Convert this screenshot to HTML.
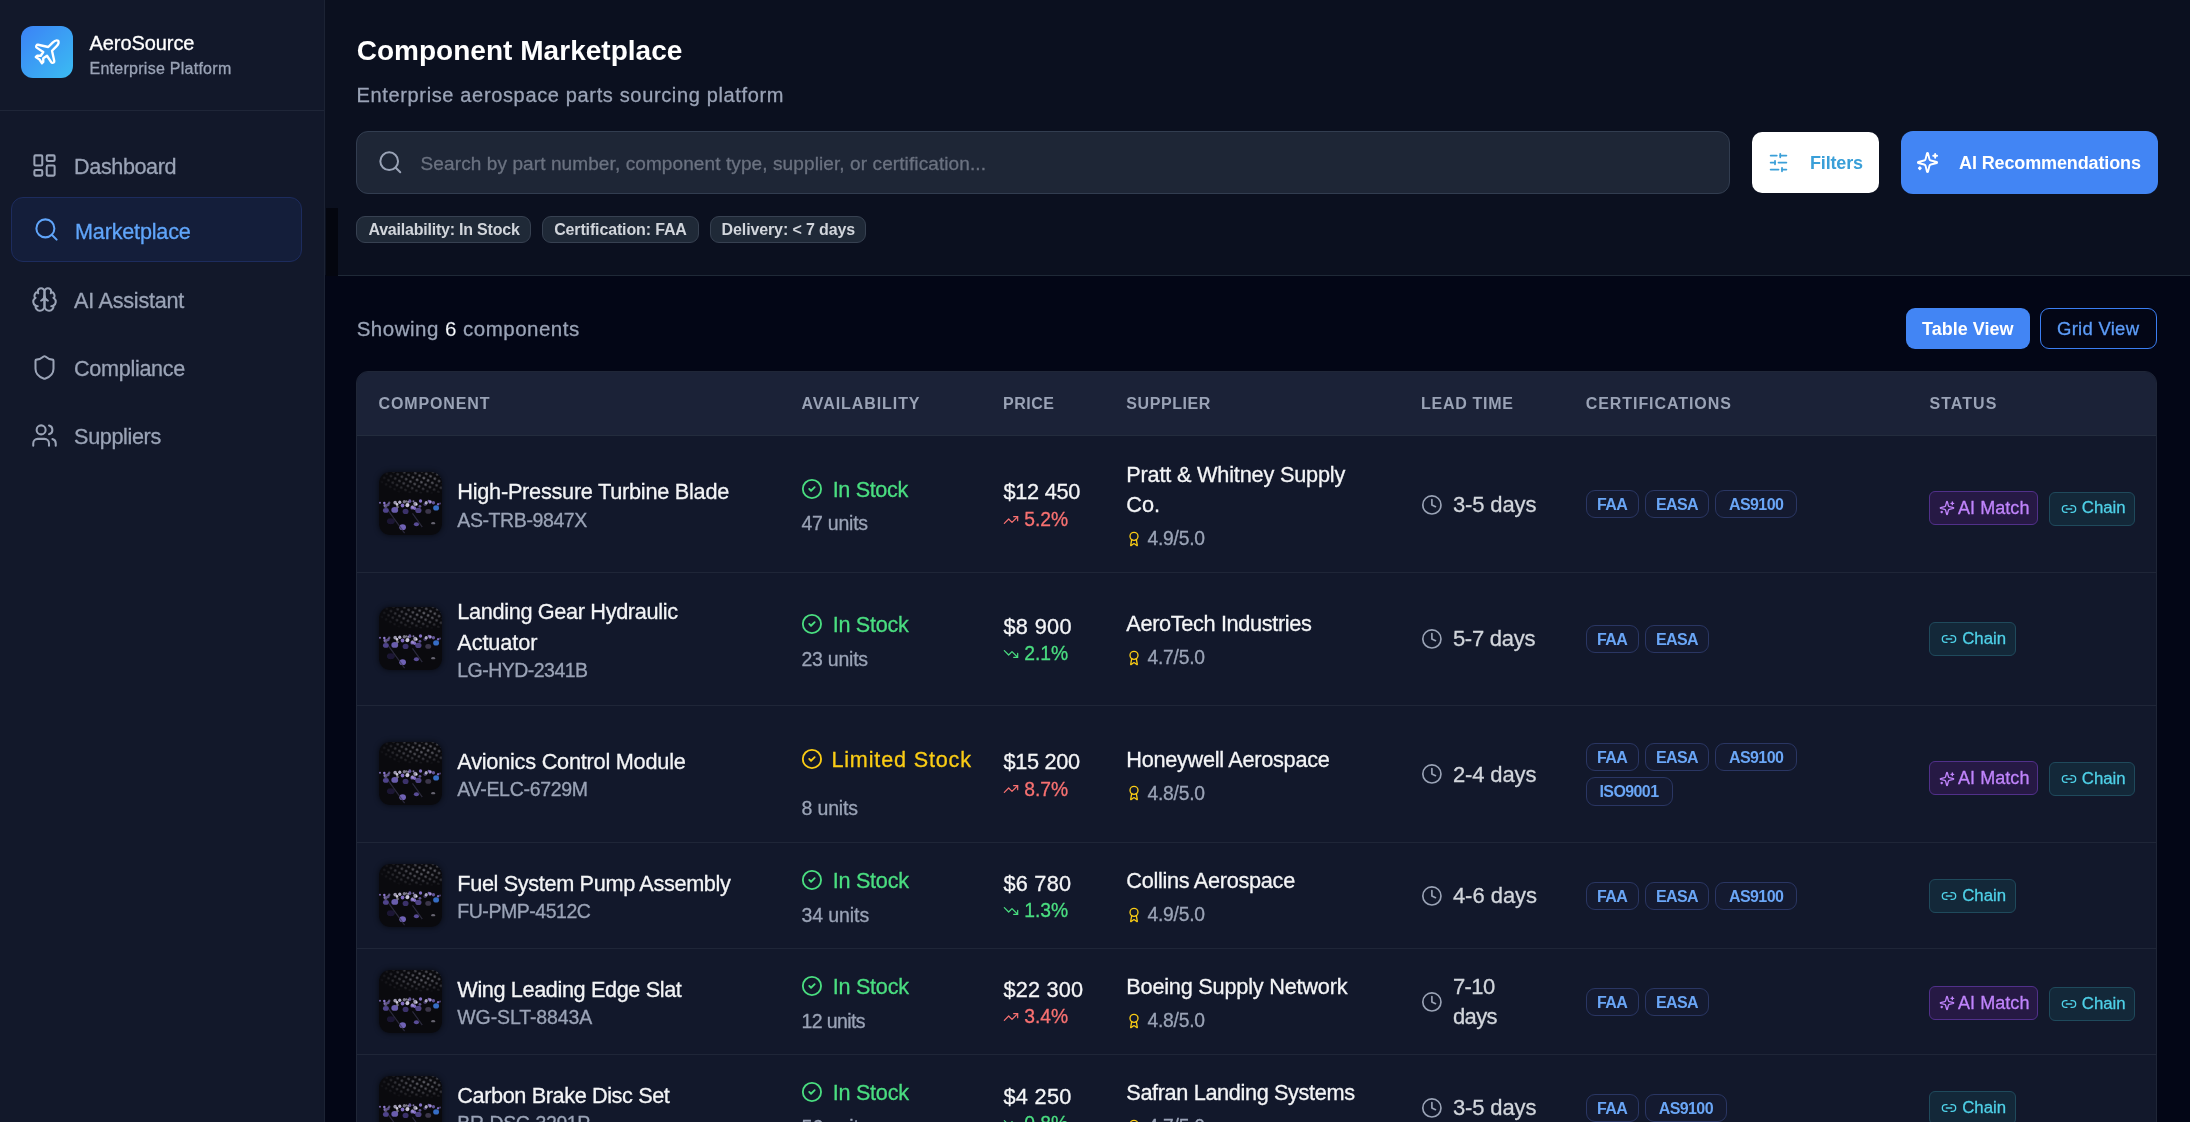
<!DOCTYPE html>
<html><head><meta charset="utf-8"><style>
html,body{margin:0;padding:0;width:2190px;height:1122px;overflow:hidden;background:#030712;font-family:"Liberation Sans", sans-serif}
</style></head><body>
<svg width="0" height="0" style="position:absolute"><defs>
<pattern id="hd" width="5" height="5" patternUnits="userSpaceOnUse" patternTransform="rotate(30)"><circle cx="2.5" cy="2.5" r="1.3" fill="#a0a0aa"/></pattern><filter id="bl"><feGaussianBlur stdDeviation=".45"/></filter>
<radialGradient id="hg" cx=".72" cy=".35" r=".75"><stop offset="0" stop-color="#fff" stop-opacity="1"/><stop offset=".6" stop-color="#fff" stop-opacity=".45"/><stop offset="1" stop-color="#fff" stop-opacity="0"/></radialGradient>
<mask id="hm"><rect width="64" height="22" fill="url(#hg)"/></mask>
</defs></svg>
<div style="position:absolute;left:0;top:0;width:2190px;height:1122px;will-change:transform">
<div style="position:absolute;left:0px;top:0px;width:324px;height:1122px;background:#12182a"></div><div style="position:absolute;left:324px;top:0px;width:1px;height:1122px;background:#1c2334"></div><div style="position:absolute;left:21px;top:26px;width:52px;height:52px;border-radius:12px;background:linear-gradient(135deg,#3b82f6,#3bbcf2)"></div><svg style="position:absolute;left:32px;top:37px" width="30" height="30" viewBox="0 0 24 24" fill="none" stroke="#fff" stroke-width="1.9" stroke-linecap="round" stroke-linejoin="round"><path d="M17.8 19.2 16 11l3.5-3.5C21 6 21.5 4 21 3c-1-.5-3 0-4.5 1.5L13 8 4.8 6.2c-.5-.1-.9.1-1.1.5l-.3.5c-.2.5-.1 1 .3 1.3L9 12l-2 3H4l-1 1 3 2 2 3 1-1v-3l3-2 3.5 5.3c.3.4.8.5 1.3.3l.5-.2c.4-.3.6-.7.5-1.2z"/></svg><div id="t0" style="position:absolute;left:89.5px;top:32.67px;font-size:20px;line-height:1;font-weight:400;color:#fff;letter-spacing:-0.069px;white-space:nowrap;-webkit-text-stroke:0.3px #fff;">AeroSource</div><div id="t1" style="position:absolute;left:89.5px;top:60.56px;font-size:16px;line-height:1;font-weight:400;color:#9aa3b6;letter-spacing:0.265px;white-space:nowrap;-webkit-text-stroke:0.3px #9aa3b6;">Enterprise Platform</div><div style="position:absolute;left:0px;top:110px;width:324px;height:1px;background:#1f2638"></div><div style="position:absolute;left:10.5px;top:197px;width:291.5px;height:64.5px;box-sizing:border-box;border-radius:12px;background:#141e3a;border:1px solid #1d2c5e"></div><svg style="position:absolute;left:30.799999999999997px;top:152.2px" width="27" height="27" viewBox="0 0 24 24" fill="none" stroke="#9aa3b6" stroke-width="1.8" stroke-linecap="round" stroke-linejoin="round"><rect width="7" height="9" x="3" y="3" rx="1"/><rect width="7" height="5" x="14" y="3" rx="1"/><rect width="7" height="9" x="14" y="12" rx="1"/><rect width="7" height="5" x="3" y="16" rx="1"/></svg><div id="t2" style="position:absolute;left:74.1px;top:156.42px;font-size:21.6px;line-height:1;font-weight:400;color:#9aa3b6;letter-spacing:-0.405px;white-space:nowrap;-webkit-text-stroke:0.3px #9aa3b6;">Dashboard</div><svg style="position:absolute;left:32.5px;top:215.7px" width="27" height="27" viewBox="0 0 24 24" fill="none" stroke="#60a5fa" stroke-width="1.8" stroke-linecap="round" stroke-linejoin="round"><circle cx="11" cy="11" r="8"/><path d="m21 21-4.3-4.3"/></svg><div id="t3" style="position:absolute;left:75px;top:221.32px;font-size:21.6px;line-height:1;font-weight:400;color:#60a5fa;letter-spacing:-0.183px;white-space:nowrap;-webkit-text-stroke:0.3px #60a5fa;">Marketplace</div><svg style="position:absolute;left:31.0px;top:285.7px" width="27" height="27" viewBox="0 0 24 24" fill="none" stroke="#9aa3b6" stroke-width="1.8" stroke-linecap="round" stroke-linejoin="round"><path d="M12 5a3 3 0 1 0-5.997.125 4 4 0 0 0-2.526 5.77 4 4 0 0 0 .556 6.588A4 4 0 1 0 12 18Z"/><path d="M12 5a3 3 0 1 1 5.997.125 4 4 0 0 1 2.526 5.77 4 4 0 0 1-.556 6.588A4 4 0 1 1 12 18Z"/><path d="M15 13a4.5 4.5 0 0 1-3-4 4.5 4.5 0 0 1-3 4"/><path d="M17.599 6.5a3 3 0 0 0 .399-1.375"/><path d="M6.003 5.125A3 3 0 0 0 6.401 6.5"/><path d="M3.477 10.896a4 4 0 0 1 .585-.396"/><path d="M19.938 10.5a4 4 0 0 1 .585.396"/><path d="M6 18a4 4 0 0 1-1.967-.516"/><path d="M19.967 17.484A4 4 0 0 1 18 18"/></svg><div id="t4" style="position:absolute;left:74.1px;top:289.92px;font-size:21.6px;line-height:1;font-weight:400;color:#9aa3b6;letter-spacing:-0.239px;white-space:nowrap;-webkit-text-stroke:0.3px #9aa3b6;">AI Assistant</div><svg style="position:absolute;left:31.0px;top:353.8px" width="27" height="27" viewBox="0 0 24 24" fill="none" stroke="#9aa3b6" stroke-width="1.8" stroke-linecap="round" stroke-linejoin="round"><path d="M20 13c0 5-3.5 7.5-7.66 8.95a1 1 0 0 1-.67-.01C7.5 20.5 4 18 4 13V6a1 1 0 0 1 1-1c2 0 4.5-1.2 6.24-2.72a1.17 1.17 0 0 1 1.52 0C14.51 3.810 17 5 19 5a1 1 0 0 1 1 1z"/></svg><div id="t5" style="position:absolute;left:74.1px;top:357.62px;font-size:21.6px;line-height:1;font-weight:400;color:#9aa3b6;letter-spacing:-0.315px;white-space:nowrap;-webkit-text-stroke:0.3px #9aa3b6;">Compliance</div><svg style="position:absolute;left:31.0px;top:421.9px" width="27" height="27" viewBox="0 0 24 24" fill="none" stroke="#9aa3b6" stroke-width="1.8" stroke-linecap="round" stroke-linejoin="round"><path d="M16 21v-2a4 4 0 0 0-4-4H6a4 4 0 0 0-4 4v2"/><circle cx="9" cy="7" r="4"/><path d="M22 21v-2a4 4 0 0 0-3-3.87"/><path d="M16 3.13a4 4 0 0 1 0 7.75"/></svg><div id="t6" style="position:absolute;left:74.1px;top:426.22px;font-size:21.6px;line-height:1;font-weight:400;color:#9aa3b6;letter-spacing:-0.366px;white-space:nowrap;-webkit-text-stroke:0.3px #9aa3b6;">Suppliers</div><div style="position:absolute;left:325px;top:0px;width:1865px;height:1122px;background:#030616"></div><div style="position:absolute;left:325px;top:0px;width:1865px;height:275px;background:#0b101f"></div><div style="position:absolute;left:326px;top:208px;width:12px;height:68px;background:#04060f"></div><div style="position:absolute;left:338px;top:275px;width:1852px;height:1px;background:#1f2937"></div><div id="t7" style="position:absolute;left:356.7px;top:37.30px;font-size:28px;line-height:1;font-weight:700;color:#fff;letter-spacing:0.026px;white-space:nowrap;">Component Marketplace</div><div id="t8" style="position:absolute;left:356.5px;top:84.77px;font-size:20px;line-height:1;font-weight:400;color:#9aa3b6;letter-spacing:0.649px;white-space:nowrap;-webkit-text-stroke:0.3px #9aa3b6;">Enterprise aerospace parts sourcing platform</div><div style="position:absolute;left:356px;top:131px;width:1374px;height:62.5px;box-sizing:border-box;border-radius:12px;background:#1e2636;border:1px solid #323d50"></div><svg style="position:absolute;left:376.7px;top:149.4px" width="26.6" height="26.6" viewBox="0 0 24 24" fill="none" stroke="#9aa3b6" stroke-width="1.8" stroke-linecap="round" stroke-linejoin="round"><circle cx="11" cy="11" r="8"/><path d="m21 21-4.3-4.3"/></svg><div id="t9" style="position:absolute;left:420.6px;top:154.02px;font-size:19px;line-height:1;font-weight:400;color:#6b7280;letter-spacing:0.100px;white-space:nowrap;-webkit-text-stroke:0.3px #6b7280;">Search by part number, component type, supplier, or certification...</div><div style="position:absolute;left:356px;top:215.5px;width:175px;height:27.5px;box-sizing:border-box;border-radius:9px;background:#1f2937;border:1px solid #374151"></div><div id="t10" style="position:absolute;left:368.4px;top:221.86px;font-size:16px;line-height:1;font-weight:700;color:#d1d5db;letter-spacing:-0.214px;white-space:nowrap;">Availability: In Stock</div><div style="position:absolute;left:542.3px;top:215.5px;width:156.5px;height:27.5px;box-sizing:border-box;border-radius:9px;background:#1f2937;border:1px solid #374151"></div><div id="t11" style="position:absolute;left:554.2px;top:221.86px;font-size:16px;line-height:1;font-weight:700;color:#d1d5db;letter-spacing:-0.143px;white-space:nowrap;">Certification: FAA</div><div style="position:absolute;left:709.7px;top:215.5px;width:156.79999999999995px;height:27.5px;box-sizing:border-box;border-radius:9px;background:#1f2937;border:1px solid #374151"></div><div id="t12" style="position:absolute;left:721.6px;top:221.86px;font-size:16px;line-height:1;font-weight:700;color:#d1d5db;letter-spacing:-0.120px;white-space:nowrap;">Delivery: &lt; 7 days</div><div style="position:absolute;left:1752px;top:132px;width:126.6px;height:60.7px;border-radius:10px;background:#fff"></div><svg style="position:absolute;left:1768px;top:152px" width="21" height="21" viewBox="0 0 24 24" fill="none" stroke="#3a9fd8" stroke-width="2" stroke-linecap="round" stroke-linejoin="round"><line x1="21" x2="14" y1="4" y2="4"/><line x1="10" x2="3" y1="4" y2="4"/><line x1="21" x2="12" y1="12" y2="12"/><line x1="8" x2="3" y1="12" y2="12"/><line x1="21" x2="16" y1="20" y2="20"/><line x1="12" x2="3" y1="20" y2="20"/><line x1="14" x2="14" y1="2" y2="6"/><line x1="8" x2="8" y1="10" y2="14"/><line x1="16" x2="16" y1="18" y2="22"/></svg><div id="t13" style="position:absolute;left:1810px;top:154.16px;font-size:18px;line-height:1;font-weight:700;color:#3a9fd8;letter-spacing:-0.172px;white-space:nowrap;">Filters</div><div style="position:absolute;left:1901px;top:131px;width:256.5px;height:62.5px;border-radius:12px;background:#4285f4"></div><svg style="position:absolute;left:1915.5px;top:151px" width="23" height="23" viewBox="0 0 24 24" fill="none" stroke="#fff" stroke-width="2" stroke-linecap="round" stroke-linejoin="round"><path d="M9.937 15.5A2 2 0 0 0 8.5 14.063l-6.135-1.582a.5.5 0 0 1 0-.962L8.5 9.936A2 2 0 0 0 9.937 8.5l1.582-6.135a.5.5 0 0 1 .963 0L14.063 8.5A2 2 0 0 0 15.5 9.937l6.135 1.581a.5.5 0 0 1 0 .964L15.5 14.063a2 2 0 0 0-1.437 1.437l-1.582 6.135a.5.5 0 0 1-.963 0z"/><path d="M20 3v4"/><path d="M22 5h-4"/><path d="M4 17v2"/><path d="M5 18H3"/></svg><div id="t14" style="position:absolute;left:1959px;top:154.16px;font-size:18px;line-height:1;font-weight:700;color:#fff;letter-spacing:-0.120px;white-space:nowrap;">AI Recommendations</div><div style="position:absolute;left:1905.5px;top:307.5px;width:124.5px;height:41.7px;border-radius:9px;background:#4285f4"></div><div id="t15" style="position:absolute;left:1922px;top:320.16px;font-size:18px;line-height:1;font-weight:700;color:#fff;letter-spacing:0.014px;white-space:nowrap;">Table View</div><div style="position:absolute;left:2040px;top:307.5px;width:117px;height:41.7px;box-sizing:border-box;border-radius:9px;border:1.5px solid #3b7ef2"></div><div id="t16" style="position:absolute;left:2057px;top:319.74px;font-size:18.5px;line-height:1;font-weight:400;color:#5c9cf8;letter-spacing:0.268px;white-space:nowrap;-webkit-text-stroke:0.3px #5c9cf8;">Grid View</div><div id="t17" style="position:absolute;left:356.7px;top:318.95px;font-size:20.5px;line-height:1;font-weight:400;color:#9aa3b6;letter-spacing:0.493px;white-space:nowrap;-webkit-text-stroke:0.3px #9aa3b6;">Showing <span style="color:#fff">6</span> components</div><div style="position:absolute;left:356px;top:370.5px;width:1801px;height:800px;box-sizing:border-box;border-radius:12px;background:#12182b;border:1px solid #1f2637;overflow:hidden"></div><div style="position:absolute;left:357px;top:371.5px;width:1799px;height:63.5px;border-radius:11px 11px 0 0;background:#1b2237"></div><div style="position:absolute;left:357px;top:435px;width:1799px;height:1px;background:#232c3d"></div><div id="t18" style="position:absolute;left:378.5px;top:395.96px;font-size:16px;line-height:1;font-weight:700;color:#9aa3b6;letter-spacing:0.875px;white-space:nowrap;">COMPONENT</div><div id="t19" style="position:absolute;left:801.5px;top:395.96px;font-size:16px;line-height:1;font-weight:700;color:#9aa3b6;letter-spacing:0.923px;white-space:nowrap;">AVAILABILITY</div><div id="t20" style="position:absolute;left:1003px;top:395.96px;font-size:16px;line-height:1;font-weight:700;color:#9aa3b6;letter-spacing:0.523px;white-space:nowrap;">PRICE</div><div id="t21" style="position:absolute;left:1126.3px;top:395.96px;font-size:16px;line-height:1;font-weight:700;color:#9aa3b6;letter-spacing:0.569px;white-space:nowrap;">SUPPLIER</div><div id="t22" style="position:absolute;left:1421px;top:395.96px;font-size:16px;line-height:1;font-weight:700;color:#9aa3b6;letter-spacing:0.723px;white-space:nowrap;">LEAD TIME</div><div id="t23" style="position:absolute;left:1585.8px;top:395.96px;font-size:16px;line-height:1;font-weight:700;color:#9aa3b6;letter-spacing:0.921px;white-space:nowrap;">CERTIFICATIONS</div><div id="t24" style="position:absolute;left:1929.4px;top:395.96px;font-size:16px;line-height:1;font-weight:700;color:#9aa3b6;letter-spacing:1.075px;white-space:nowrap;">STATUS</div><div style="position:absolute;left:357px;top:572px;width:1799px;height:1px;background:#1f2638"></div><div style="position:absolute;left:357px;top:704.5px;width:1799px;height:1px;background:#1f2638"></div><div style="position:absolute;left:357px;top:842px;width:1799px;height:1px;background:#1f2638"></div><div style="position:absolute;left:357px;top:948px;width:1799px;height:1px;background:#1f2638"></div><div style="position:absolute;left:357px;top:1054px;width:1799px;height:1px;background:#1f2638"></div><svg style="position:absolute;left:378.5px;top:472px;border-radius:11px;box-shadow:0 0 5px 1px rgba(0,0,0,.45)" width="63" height="63" viewBox="0 0 64 64"><rect width="64" height="64" fill="#0a0a0e"/>
<rect x="0" y="0" width="64" height="22" fill="url(#hd)" mask="url(#hm)" opacity=".7"/><g filter="url(#bl)"><ellipse cx="21.1" cy="30.7" rx="1.6" ry="1.8" fill="#d8d2f0" opacity="0.82"/><ellipse cx="6.8" cy="34.5" rx="1.9" ry="2.1" fill="#b9a8f0" opacity="0.47"/><ellipse cx="27.9" cy="29.9" rx="1.0" ry="1.1" fill="#e8e4f5" opacity="0.48"/><ellipse cx="36.1" cy="36.7" rx="1.6" ry="1.8" fill="#8f7ad8" opacity="0.88"/><ellipse cx="36.8" cy="32.3" rx="2.0" ry="2.2" fill="#d8d2f0" opacity="0.70"/><ellipse cx="9.3" cy="33.1" rx="1.5" ry="1.6" fill="#8f7ad8" opacity="0.59"/><ellipse cx="51.6" cy="30.2" rx="1.5" ry="1.7" fill="#b9a8f0" opacity="0.62"/><ellipse cx="35.0" cy="29.7" rx="1.0" ry="1.1" fill="#b9a8f0" opacity="0.67"/><ellipse cx="34.0" cy="35.4" rx="1.4" ry="1.6" fill="#e8e4f5" opacity="0.61"/><ellipse cx="16.4" cy="31.0" rx="1.8" ry="1.9" fill="#d8d2f0" opacity="0.71"/><ellipse cx="33.6" cy="36.2" rx="1.7" ry="1.9" fill="#9d86e8" opacity="0.72"/><ellipse cx="5.5" cy="34.0" rx="1.1" ry="1.2" fill="#9d86e8" opacity="0.52"/><ellipse cx="31.3" cy="29.6" rx="1.6" ry="1.8" fill="#8f7ad8" opacity="0.71"/><ellipse cx="55.3" cy="31.2" rx="1.7" ry="1.8" fill="#8f7ad8" opacity="0.67"/><ellipse cx="50.4" cy="29.3" rx="1.0" ry="1.1" fill="#9d86e8" opacity="0.66"/><ellipse cx="42.2" cy="29.5" rx="1.7" ry="1.8" fill="#8f7ad8" opacity="0.90"/><ellipse cx="52.0" cy="31.0" rx="1.3" ry="1.5" fill="#9d86e8" opacity="0.46"/><ellipse cx="29.6" cy="30.6" rx="1.0" ry="1.1" fill="#d8d2f0" opacity="0.55"/><ellipse cx="18.8" cy="35.5" rx="1.3" ry="1.5" fill="#e8e4f5" opacity="0.49"/><ellipse cx="28.8" cy="33.7" rx="1.9" ry="2.1" fill="#e8e4f5" opacity="0.84"/><ellipse cx="18.3" cy="32.9" rx="1.3" ry="1.4" fill="#e8e4f5" opacity="0.88"/><ellipse cx="10.4" cy="31.2" rx="1.2" ry="1.3" fill="#b9a8f0" opacity="0.46"/><ellipse cx="52.5" cy="30.2" rx="1.2" ry="1.3" fill="#b9a8f0" opacity="0.64"/><ellipse cx="23.9" cy="34.0" rx="1.9" ry="2.1" fill="#8f7ad8" opacity="0.88"/><ellipse cx="41.6" cy="34.9" rx="1.4" ry="1.5" fill="#8f7ad8" opacity="0.63"/><ellipse cx="25.7" cy="30.2" rx="1.6" ry="1.8" fill="#d8d2f0" opacity="0.54"/><ellipse cx="62.0" cy="32.0" rx="1.0" ry="1.1" fill="#8f7ad8" opacity="0.47"/><ellipse cx="1.0" cy="31.2" rx="1.0" ry="1.1" fill="#9d86e8" opacity="0.73"/><ellipse cx="5.4" cy="31.5" rx="1.3" ry="1.4" fill="#9d86e8" opacity="0.88"/><ellipse cx="38.3" cy="32.9" rx="1.0" ry="1.1" fill="#e8e4f5" opacity="0.90"/><ellipse cx="29.9" cy="33.2" rx="1.0" ry="1.1" fill="#d8d2f0" opacity="0.79"/><ellipse cx="46.9" cy="32.7" rx="1.7" ry="1.8" fill="#8f7ad8" opacity="0.46"/><ellipse cx="60.0" cy="32.8" rx="1.1" ry="1.2" fill="#8f7ad8" opacity="0.86"/><ellipse cx="48.0" cy="31.2" rx="1.6" ry="1.8" fill="#d8d2f0" opacity="0.76"/><ellipse cx="7" cy="39" rx="3" ry="2.5" fill="#6c5cc0" opacity="0.7"/><ellipse cx="16" cy="38.5" rx="3.5" ry="3" fill="#8a78e0" opacity="0.75"/><ellipse cx="27" cy="40" rx="3" ry="2.6" fill="#5a4ca8" opacity="0.6"/><ellipse cx="40" cy="39" rx="3.2" ry="2.6" fill="#7a68d0" opacity="0.6"/><ellipse cx="50" cy="40" rx="3" ry="2.5" fill="#5c5470" opacity="0.6"/><ellipse cx="58" cy="36.5" rx="3" ry="2.6" fill="#3a78d8" opacity="0.9"/><ellipse cx="24" cy="56" rx="3.4" ry="3" fill="#8a78e0" opacity="0.8"/><ellipse cx="38" cy="53" rx="2.6" ry="2" fill="#7a68d0" opacity="0.7"/><ellipse cx="12" cy="50" rx="4" ry="3" fill="#1c1838" opacity="0.9"/><ellipse cx="55" cy="52" rx="2" ry="1.2" fill="#c0bcd0" opacity="0.5"/><path d="M10 40 L26 62 M34 42 L44 56" stroke="#3a3650" stroke-width="1.2" opacity=".7"/></g></svg><div id="t25" style="position:absolute;left:457.3px;top:481.23px;font-size:21.7px;line-height:1;font-weight:400;color:#f3f4f6;letter-spacing:-0.249px;white-space:nowrap;-webkit-text-stroke:0.3px #f3f4f6;">High-Pressure Turbine Blade</div><div id="t26" style="position:absolute;left:457.3px;top:510.89px;font-size:19.5px;line-height:1;font-weight:400;color:#9aa3b6;letter-spacing:-0.399px;white-space:nowrap;-webkit-text-stroke:0.3px #9aa3b6;">AS-TRB-9847X</div><svg style="position:absolute;left:800.55px;top:477.65px" width="21.9" height="21.9" viewBox="0 0 24 24" fill="none" stroke="#4ade80" stroke-width="2" stroke-linecap="round" stroke-linejoin="round"><circle cx="12" cy="12" r="10"/><path d="m9 12 2 2 4-4"/></svg><div id="t27" style="position:absolute;left:832.7px;top:478.52px;font-size:21.6px;line-height:1;font-weight:400;color:#4ade80;letter-spacing:-0.345px;white-space:nowrap;-webkit-text-stroke:0.3px #4ade80;">In Stock</div><div id="t28" style="position:absolute;left:801.5px;top:514.39px;font-size:19.5px;line-height:1;font-weight:400;color:#9aa3b6;letter-spacing:-0.245px;white-space:nowrap;-webkit-text-stroke:0.3px #9aa3b6;">47 units</div><div id="t29" style="position:absolute;left:1003.4px;top:481.43px;font-size:21.7px;line-height:1;font-weight:400;color:#f3f4f6;letter-spacing:-0.234px;white-space:nowrap;-webkit-text-stroke:0.3px #f3f4f6;">$12 450</div><svg style="position:absolute;left:1002.8px;top:512px" width="16" height="16" viewBox="0 0 24 24" fill="none" stroke="#f87171" stroke-width="1.8" stroke-linecap="round" stroke-linejoin="round"><polyline points="22 7 13.5 15.5 8.5 10.5 2 17"/><polyline points="16 7 22 7 22 13"/></svg><div id="t30" style="position:absolute;left:1024.2px;top:510.16px;font-size:19.3px;line-height:1;font-weight:400;color:#f87171;letter-spacing:0.000px;white-space:nowrap;-webkit-text-stroke:0.3px #f87171;">5.2%</div><div id="t31" style="position:absolute;left:1126.3px;top:463.63px;font-size:21.7px;line-height:1;font-weight:400;color:#f3f4f6;letter-spacing:-0.190px;white-space:nowrap;-webkit-text-stroke:0.3px #f3f4f6;">Pratt &amp; Whitney Supply</div><div id="t32" style="position:absolute;left:1126.3px;top:493.93px;font-size:21.7px;line-height:1;font-weight:400;color:#f3f4f6;letter-spacing:0.000px;white-space:nowrap;-webkit-text-stroke:0.3px #f3f4f6;">Co.</div><svg style="position:absolute;left:1126px;top:530.8px" width="16" height="16" viewBox="0 0 24 24" fill="none" stroke="#facc15" stroke-width="2" stroke-linecap="round" stroke-linejoin="round"><path d="m15.477 12.89 1.515 8.526a.5.5 0 0 1-.81.47l-3.58-2.687a1 1 0 0 0-1.197 0l-3.586 2.686a.5.5 0 0 1-.81-.469l1.514-8.526"/><circle cx="12" cy="8" r="6"/></svg><div id="t33" style="position:absolute;left:1147.5px;top:529.26px;font-size:19.3px;line-height:1;font-weight:400;color:#9aa3b6;letter-spacing:-0.245px;white-space:nowrap;-webkit-text-stroke:0.3px #9aa3b6;">4.9/5.0</div><svg style="position:absolute;left:1420.6px;top:493.5px" width="21.8" height="21.8" viewBox="0 0 24 24" fill="none" stroke="#9aa3b6" stroke-width="1.8" stroke-linecap="round" stroke-linejoin="round"><circle cx="12" cy="12" r="10"/><polyline points="12 6 12 12 16 14"/></svg><div id="t34" style="position:absolute;left:1452.9px;top:494.18px;font-size:22px;line-height:1;font-weight:400;color:#d1d5db;letter-spacing:-0.113px;white-space:nowrap;-webkit-text-stroke:0.3px #d1d5db;">3-5 days</div><div style="position:absolute;left:1585.5px;top:489.8px;width:53.59999999999991px;height:28.5px;box-sizing:border-box;border-radius:9px;background:#141a30;border:1px solid #2a3663;color:#6aa6f6;font-size:16px;font-weight:700;letter-spacing:-0.6px;text-indent:-0.6px;text-align:center;line-height:28.5px;padding-top:0px">FAA</div><div style="position:absolute;left:1645.1px;top:489.8px;width:64.29999999999995px;height:28.5px;box-sizing:border-box;border-radius:9px;background:#141a30;border:1px solid #2a3663;color:#6aa6f6;font-size:16px;font-weight:700;letter-spacing:-0.6px;text-indent:-0.6px;text-align:center;line-height:28.5px;padding-top:0px">EASA</div><div style="position:absolute;left:1715.3999999999999px;top:489.8px;width:82.09999999999991px;height:28.5px;box-sizing:border-box;border-radius:9px;background:#141a30;border:1px solid #2a3663;color:#6aa6f6;font-size:16px;font-weight:700;letter-spacing:-0.6px;text-indent:-0.6px;text-align:center;line-height:28.5px;padding-top:0px">AS9100</div><div style="position:absolute;left:1929.4px;top:490.6px;width:108.8px;height:34px;box-sizing:border-box;border-radius:6px;background:#261944;border:1px solid #51308a"></div><svg style="position:absolute;left:1939px;top:500.1px" width="16" height="16" viewBox="0 0 24 24" fill="none" stroke="#c084fc" stroke-width="2" stroke-linecap="round" stroke-linejoin="round"><path d="M9.937 15.5A2 2 0 0 0 8.5 14.063l-6.135-1.582a.5.5 0 0 1 0-.962L8.5 9.936A2 2 0 0 0 9.937 8.5l1.582-6.135a.5.5 0 0 1 .963 0L14.063 8.5A2 2 0 0 0 15.5 9.937l6.135 1.581a.5.5 0 0 1 0 .964L15.5 14.063a2 2 0 0 0-1.437 1.437l-1.582 6.135a.5.5 0 0 1-.963 0z"/><path d="M20 3v4"/><path d="M22 5h-4"/><path d="M4 17v2"/><path d="M5 18H3"/></svg><div id="t35" style="position:absolute;left:1958px;top:498.86px;font-size:18px;line-height:1;font-weight:400;color:#c084fc;letter-spacing:0.053px;white-space:nowrap;-webkit-text-stroke:0.3px #c084fc;">AI Match</div><div style="position:absolute;left:2049px;top:491.5px;width:86.3px;height:34px;box-sizing:border-box;border-radius:6px;background:#132839;border:1px solid #1f4a5c"></div><svg style="position:absolute;left:2061px;top:500.5px" width="16" height="16" viewBox="0 0 24 24" fill="none" stroke="#4fd1e8" stroke-width="2" stroke-linecap="round" stroke-linejoin="round"><path d="M9 17H7A5 5 0 0 1 7 7h2"/><path d="M15 7h2a5 5 0 1 1 0 10h-2"/><line x1="8" x2="16" y1="12" y2="12"/></svg><div id="t36" style="position:absolute;left:2081.8px;top:500.48px;font-size:16.8px;line-height:1;font-weight:400;color:#4fd1e8;letter-spacing:0.000px;white-space:nowrap;-webkit-text-stroke:0.3px #4fd1e8;">Chain</div><svg style="position:absolute;left:378.5px;top:607px;border-radius:11px;box-shadow:0 0 5px 1px rgba(0,0,0,.45)" width="63" height="63" viewBox="0 0 64 64"><rect width="64" height="64" fill="#0a0a0e"/>
<rect x="0" y="0" width="64" height="22" fill="url(#hd)" mask="url(#hm)" opacity=".7"/><g filter="url(#bl)"><ellipse cx="21.1" cy="30.7" rx="1.6" ry="1.8" fill="#d8d2f0" opacity="0.82"/><ellipse cx="6.8" cy="34.5" rx="1.9" ry="2.1" fill="#b9a8f0" opacity="0.47"/><ellipse cx="27.9" cy="29.9" rx="1.0" ry="1.1" fill="#e8e4f5" opacity="0.48"/><ellipse cx="36.1" cy="36.7" rx="1.6" ry="1.8" fill="#8f7ad8" opacity="0.88"/><ellipse cx="36.8" cy="32.3" rx="2.0" ry="2.2" fill="#d8d2f0" opacity="0.70"/><ellipse cx="9.3" cy="33.1" rx="1.5" ry="1.6" fill="#8f7ad8" opacity="0.59"/><ellipse cx="51.6" cy="30.2" rx="1.5" ry="1.7" fill="#b9a8f0" opacity="0.62"/><ellipse cx="35.0" cy="29.7" rx="1.0" ry="1.1" fill="#b9a8f0" opacity="0.67"/><ellipse cx="34.0" cy="35.4" rx="1.4" ry="1.6" fill="#e8e4f5" opacity="0.61"/><ellipse cx="16.4" cy="31.0" rx="1.8" ry="1.9" fill="#d8d2f0" opacity="0.71"/><ellipse cx="33.6" cy="36.2" rx="1.7" ry="1.9" fill="#9d86e8" opacity="0.72"/><ellipse cx="5.5" cy="34.0" rx="1.1" ry="1.2" fill="#9d86e8" opacity="0.52"/><ellipse cx="31.3" cy="29.6" rx="1.6" ry="1.8" fill="#8f7ad8" opacity="0.71"/><ellipse cx="55.3" cy="31.2" rx="1.7" ry="1.8" fill="#8f7ad8" opacity="0.67"/><ellipse cx="50.4" cy="29.3" rx="1.0" ry="1.1" fill="#9d86e8" opacity="0.66"/><ellipse cx="42.2" cy="29.5" rx="1.7" ry="1.8" fill="#8f7ad8" opacity="0.90"/><ellipse cx="52.0" cy="31.0" rx="1.3" ry="1.5" fill="#9d86e8" opacity="0.46"/><ellipse cx="29.6" cy="30.6" rx="1.0" ry="1.1" fill="#d8d2f0" opacity="0.55"/><ellipse cx="18.8" cy="35.5" rx="1.3" ry="1.5" fill="#e8e4f5" opacity="0.49"/><ellipse cx="28.8" cy="33.7" rx="1.9" ry="2.1" fill="#e8e4f5" opacity="0.84"/><ellipse cx="18.3" cy="32.9" rx="1.3" ry="1.4" fill="#e8e4f5" opacity="0.88"/><ellipse cx="10.4" cy="31.2" rx="1.2" ry="1.3" fill="#b9a8f0" opacity="0.46"/><ellipse cx="52.5" cy="30.2" rx="1.2" ry="1.3" fill="#b9a8f0" opacity="0.64"/><ellipse cx="23.9" cy="34.0" rx="1.9" ry="2.1" fill="#8f7ad8" opacity="0.88"/><ellipse cx="41.6" cy="34.9" rx="1.4" ry="1.5" fill="#8f7ad8" opacity="0.63"/><ellipse cx="25.7" cy="30.2" rx="1.6" ry="1.8" fill="#d8d2f0" opacity="0.54"/><ellipse cx="62.0" cy="32.0" rx="1.0" ry="1.1" fill="#8f7ad8" opacity="0.47"/><ellipse cx="1.0" cy="31.2" rx="1.0" ry="1.1" fill="#9d86e8" opacity="0.73"/><ellipse cx="5.4" cy="31.5" rx="1.3" ry="1.4" fill="#9d86e8" opacity="0.88"/><ellipse cx="38.3" cy="32.9" rx="1.0" ry="1.1" fill="#e8e4f5" opacity="0.90"/><ellipse cx="29.9" cy="33.2" rx="1.0" ry="1.1" fill="#d8d2f0" opacity="0.79"/><ellipse cx="46.9" cy="32.7" rx="1.7" ry="1.8" fill="#8f7ad8" opacity="0.46"/><ellipse cx="60.0" cy="32.8" rx="1.1" ry="1.2" fill="#8f7ad8" opacity="0.86"/><ellipse cx="48.0" cy="31.2" rx="1.6" ry="1.8" fill="#d8d2f0" opacity="0.76"/><ellipse cx="7" cy="39" rx="3" ry="2.5" fill="#6c5cc0" opacity="0.7"/><ellipse cx="16" cy="38.5" rx="3.5" ry="3" fill="#8a78e0" opacity="0.75"/><ellipse cx="27" cy="40" rx="3" ry="2.6" fill="#5a4ca8" opacity="0.6"/><ellipse cx="40" cy="39" rx="3.2" ry="2.6" fill="#7a68d0" opacity="0.6"/><ellipse cx="50" cy="40" rx="3" ry="2.5" fill="#5c5470" opacity="0.6"/><ellipse cx="58" cy="36.5" rx="3" ry="2.6" fill="#3a78d8" opacity="0.9"/><ellipse cx="24" cy="56" rx="3.4" ry="3" fill="#8a78e0" opacity="0.8"/><ellipse cx="38" cy="53" rx="2.6" ry="2" fill="#7a68d0" opacity="0.7"/><ellipse cx="12" cy="50" rx="4" ry="3" fill="#1c1838" opacity="0.9"/><ellipse cx="55" cy="52" rx="2" ry="1.2" fill="#c0bcd0" opacity="0.5"/><path d="M10 40 L26 62 M34 42 L44 56" stroke="#3a3650" stroke-width="1.2" opacity=".7"/></g></svg><div id="t37" style="position:absolute;left:457.3px;top:601.03px;font-size:21.7px;line-height:1;font-weight:400;color:#f3f4f6;letter-spacing:-0.341px;white-space:nowrap;-webkit-text-stroke:0.3px #f3f4f6;">Landing Gear Hydraulic</div><div id="t38" style="position:absolute;left:457.3px;top:632.03px;font-size:21.7px;line-height:1;font-weight:400;color:#f3f4f6;letter-spacing:-0.097px;white-space:nowrap;-webkit-text-stroke:0.3px #f3f4f6;">Actuator</div><div id="t39" style="position:absolute;left:457.3px;top:661.39px;font-size:19.5px;line-height:1;font-weight:400;color:#9aa3b6;letter-spacing:-0.524px;white-space:nowrap;-webkit-text-stroke:0.3px #9aa3b6;">LG-HYD-2341B</div><svg style="position:absolute;left:800.55px;top:612.65px" width="21.9" height="21.9" viewBox="0 0 24 24" fill="none" stroke="#4ade80" stroke-width="2" stroke-linecap="round" stroke-linejoin="round"><circle cx="12" cy="12" r="10"/><path d="m9 12 2 2 4-4"/></svg><div id="t40" style="position:absolute;left:832.7px;top:613.52px;font-size:21.6px;line-height:1;font-weight:400;color:#4ade80;letter-spacing:-0.274px;white-space:nowrap;-webkit-text-stroke:0.3px #4ade80;">In Stock</div><div id="t41" style="position:absolute;left:801.5px;top:649.59px;font-size:19.5px;line-height:1;font-weight:400;color:#9aa3b6;letter-spacing:-0.245px;white-space:nowrap;-webkit-text-stroke:0.3px #9aa3b6;">23 units</div><div id="t42" style="position:absolute;left:1003.4px;top:616.43px;font-size:21.7px;line-height:1;font-weight:400;color:#f3f4f6;letter-spacing:0.371px;white-space:nowrap;-webkit-text-stroke:0.3px #f3f4f6;">$8 900</div><svg style="position:absolute;left:1002.8px;top:646.2px" width="16" height="16" viewBox="0 0 24 24" fill="none" stroke="#4ade80" stroke-width="1.8" stroke-linecap="round" stroke-linejoin="round"><polyline points="22 17 13.5 8.5 8.5 13.5 2 7"/><polyline points="16 17 22 17 22 11"/></svg><div id="t43" style="position:absolute;left:1024.2px;top:644.36px;font-size:19.3px;line-height:1;font-weight:400;color:#4ade80;letter-spacing:0.000px;white-space:nowrap;-webkit-text-stroke:0.3px #4ade80;">2.1%</div><div id="t44" style="position:absolute;left:1126.3px;top:613.33px;font-size:21.7px;line-height:1;font-weight:400;color:#f3f4f6;letter-spacing:-0.337px;white-space:nowrap;-webkit-text-stroke:0.3px #f3f4f6;">AeroTech Industries</div><svg style="position:absolute;left:1126px;top:649.5px" width="16" height="16" viewBox="0 0 24 24" fill="none" stroke="#facc15" stroke-width="2" stroke-linecap="round" stroke-linejoin="round"><path d="m15.477 12.89 1.515 8.526a.5.5 0 0 1-.81.47l-3.58-2.687a1 1 0 0 0-1.197 0l-3.586 2.686a.5.5 0 0 1-.81-.469l1.514-8.526"/><circle cx="12" cy="8" r="6"/></svg><div id="t45" style="position:absolute;left:1147.5px;top:647.96px;font-size:19.3px;line-height:1;font-weight:400;color:#9aa3b6;letter-spacing:-0.245px;white-space:nowrap;-webkit-text-stroke:0.3px #9aa3b6;">4.7/5.0</div><svg style="position:absolute;left:1420.6px;top:628.1px" width="21.8" height="21.8" viewBox="0 0 24 24" fill="none" stroke="#9aa3b6" stroke-width="1.8" stroke-linecap="round" stroke-linejoin="round"><circle cx="12" cy="12" r="10"/><polyline points="12 6 12 12 16 14"/></svg><div id="t46" style="position:absolute;left:1452.9px;top:628.48px;font-size:22px;line-height:1;font-weight:400;color:#d1d5db;letter-spacing:-0.270px;white-space:nowrap;-webkit-text-stroke:0.3px #d1d5db;">5-7 days</div><div style="position:absolute;left:1585.5px;top:624.6px;width:53.59999999999991px;height:28.5px;box-sizing:border-box;border-radius:9px;background:#141a30;border:1px solid #2a3663;color:#6aa6f6;font-size:16px;font-weight:700;letter-spacing:-0.6px;text-indent:-0.6px;text-align:center;line-height:28.5px;padding-top:0px">FAA</div><div style="position:absolute;left:1645.1px;top:624.6px;width:64.29999999999995px;height:28.5px;box-sizing:border-box;border-radius:9px;background:#141a30;border:1px solid #2a3663;color:#6aa6f6;font-size:16px;font-weight:700;letter-spacing:-0.6px;text-indent:-0.6px;text-align:center;line-height:28.5px;padding-top:0px">EASA</div><div style="position:absolute;left:1929.4px;top:622px;width:86.3px;height:34px;box-sizing:border-box;border-radius:6px;background:#132839;border:1px solid #1f4a5c"></div><svg style="position:absolute;left:1941.4px;top:631px" width="16" height="16" viewBox="0 0 24 24" fill="none" stroke="#4fd1e8" stroke-width="2" stroke-linecap="round" stroke-linejoin="round"><path d="M9 17H7A5 5 0 0 1 7 7h2"/><path d="M15 7h2a5 5 0 1 1 0 10h-2"/><line x1="8" x2="16" y1="12" y2="12"/></svg><div id="t47" style="position:absolute;left:1962.2px;top:630.98px;font-size:16.8px;line-height:1;font-weight:400;color:#4fd1e8;letter-spacing:0.000px;white-space:nowrap;-webkit-text-stroke:0.3px #4fd1e8;">Chain</div><svg style="position:absolute;left:378.5px;top:742.4px;border-radius:11px;box-shadow:0 0 5px 1px rgba(0,0,0,.45)" width="63" height="63" viewBox="0 0 64 64"><rect width="64" height="64" fill="#0a0a0e"/>
<rect x="0" y="0" width="64" height="22" fill="url(#hd)" mask="url(#hm)" opacity=".7"/><g filter="url(#bl)"><ellipse cx="21.1" cy="30.7" rx="1.6" ry="1.8" fill="#d8d2f0" opacity="0.82"/><ellipse cx="6.8" cy="34.5" rx="1.9" ry="2.1" fill="#b9a8f0" opacity="0.47"/><ellipse cx="27.9" cy="29.9" rx="1.0" ry="1.1" fill="#e8e4f5" opacity="0.48"/><ellipse cx="36.1" cy="36.7" rx="1.6" ry="1.8" fill="#8f7ad8" opacity="0.88"/><ellipse cx="36.8" cy="32.3" rx="2.0" ry="2.2" fill="#d8d2f0" opacity="0.70"/><ellipse cx="9.3" cy="33.1" rx="1.5" ry="1.6" fill="#8f7ad8" opacity="0.59"/><ellipse cx="51.6" cy="30.2" rx="1.5" ry="1.7" fill="#b9a8f0" opacity="0.62"/><ellipse cx="35.0" cy="29.7" rx="1.0" ry="1.1" fill="#b9a8f0" opacity="0.67"/><ellipse cx="34.0" cy="35.4" rx="1.4" ry="1.6" fill="#e8e4f5" opacity="0.61"/><ellipse cx="16.4" cy="31.0" rx="1.8" ry="1.9" fill="#d8d2f0" opacity="0.71"/><ellipse cx="33.6" cy="36.2" rx="1.7" ry="1.9" fill="#9d86e8" opacity="0.72"/><ellipse cx="5.5" cy="34.0" rx="1.1" ry="1.2" fill="#9d86e8" opacity="0.52"/><ellipse cx="31.3" cy="29.6" rx="1.6" ry="1.8" fill="#8f7ad8" opacity="0.71"/><ellipse cx="55.3" cy="31.2" rx="1.7" ry="1.8" fill="#8f7ad8" opacity="0.67"/><ellipse cx="50.4" cy="29.3" rx="1.0" ry="1.1" fill="#9d86e8" opacity="0.66"/><ellipse cx="42.2" cy="29.5" rx="1.7" ry="1.8" fill="#8f7ad8" opacity="0.90"/><ellipse cx="52.0" cy="31.0" rx="1.3" ry="1.5" fill="#9d86e8" opacity="0.46"/><ellipse cx="29.6" cy="30.6" rx="1.0" ry="1.1" fill="#d8d2f0" opacity="0.55"/><ellipse cx="18.8" cy="35.5" rx="1.3" ry="1.5" fill="#e8e4f5" opacity="0.49"/><ellipse cx="28.8" cy="33.7" rx="1.9" ry="2.1" fill="#e8e4f5" opacity="0.84"/><ellipse cx="18.3" cy="32.9" rx="1.3" ry="1.4" fill="#e8e4f5" opacity="0.88"/><ellipse cx="10.4" cy="31.2" rx="1.2" ry="1.3" fill="#b9a8f0" opacity="0.46"/><ellipse cx="52.5" cy="30.2" rx="1.2" ry="1.3" fill="#b9a8f0" opacity="0.64"/><ellipse cx="23.9" cy="34.0" rx="1.9" ry="2.1" fill="#8f7ad8" opacity="0.88"/><ellipse cx="41.6" cy="34.9" rx="1.4" ry="1.5" fill="#8f7ad8" opacity="0.63"/><ellipse cx="25.7" cy="30.2" rx="1.6" ry="1.8" fill="#d8d2f0" opacity="0.54"/><ellipse cx="62.0" cy="32.0" rx="1.0" ry="1.1" fill="#8f7ad8" opacity="0.47"/><ellipse cx="1.0" cy="31.2" rx="1.0" ry="1.1" fill="#9d86e8" opacity="0.73"/><ellipse cx="5.4" cy="31.5" rx="1.3" ry="1.4" fill="#9d86e8" opacity="0.88"/><ellipse cx="38.3" cy="32.9" rx="1.0" ry="1.1" fill="#e8e4f5" opacity="0.90"/><ellipse cx="29.9" cy="33.2" rx="1.0" ry="1.1" fill="#d8d2f0" opacity="0.79"/><ellipse cx="46.9" cy="32.7" rx="1.7" ry="1.8" fill="#8f7ad8" opacity="0.46"/><ellipse cx="60.0" cy="32.8" rx="1.1" ry="1.2" fill="#8f7ad8" opacity="0.86"/><ellipse cx="48.0" cy="31.2" rx="1.6" ry="1.8" fill="#d8d2f0" opacity="0.76"/><ellipse cx="7" cy="39" rx="3" ry="2.5" fill="#6c5cc0" opacity="0.7"/><ellipse cx="16" cy="38.5" rx="3.5" ry="3" fill="#8a78e0" opacity="0.75"/><ellipse cx="27" cy="40" rx="3" ry="2.6" fill="#5a4ca8" opacity="0.6"/><ellipse cx="40" cy="39" rx="3.2" ry="2.6" fill="#7a68d0" opacity="0.6"/><ellipse cx="50" cy="40" rx="3" ry="2.5" fill="#5c5470" opacity="0.6"/><ellipse cx="58" cy="36.5" rx="3" ry="2.6" fill="#3a78d8" opacity="0.9"/><ellipse cx="24" cy="56" rx="3.4" ry="3" fill="#8a78e0" opacity="0.8"/><ellipse cx="38" cy="53" rx="2.6" ry="2" fill="#7a68d0" opacity="0.7"/><ellipse cx="12" cy="50" rx="4" ry="3" fill="#1c1838" opacity="0.9"/><ellipse cx="55" cy="52" rx="2" ry="1.2" fill="#c0bcd0" opacity="0.5"/><path d="M10 40 L26 62 M34 42 L44 56" stroke="#3a3650" stroke-width="1.2" opacity=".7"/></g></svg><div id="t48" style="position:absolute;left:457.3px;top:750.73px;font-size:21.7px;line-height:1;font-weight:400;color:#f3f4f6;letter-spacing:-0.226px;white-space:nowrap;-webkit-text-stroke:0.3px #f3f4f6;">Avionics Control Module</div><div id="t49" style="position:absolute;left:457.3px;top:780.29px;font-size:19.5px;line-height:1;font-weight:400;color:#9aa3b6;letter-spacing:-0.295px;white-space:nowrap;-webkit-text-stroke:0.3px #9aa3b6;">AV-ELC-6729M</div><svg style="position:absolute;left:800.55px;top:747.85px" width="21.9" height="21.9" viewBox="0 0 24 24" fill="none" stroke="#facc15" stroke-width="2" stroke-linecap="round" stroke-linejoin="round"><circle cx="12" cy="12" r="10"/><path d="m9 12 2 2 4-4"/></svg><div id="t50" style="position:absolute;left:831.4px;top:748.72px;font-size:21.6px;line-height:1;font-weight:400;color:#facc15;letter-spacing:0.831px;white-space:nowrap;-webkit-text-stroke:0.3px #facc15;">Limited Stock</div><div id="t51" style="position:absolute;left:801.5px;top:799.29px;font-size:19.5px;line-height:1;font-weight:400;color:#9aa3b6;letter-spacing:-0.159px;white-space:nowrap;-webkit-text-stroke:0.3px #9aa3b6;">8 units</div><div id="t52" style="position:absolute;left:1003.4px;top:750.93px;font-size:21.7px;line-height:1;font-weight:400;color:#f3f4f6;letter-spacing:-0.284px;white-space:nowrap;-webkit-text-stroke:0.3px #f3f4f6;">$15 200</div><svg style="position:absolute;left:1002.8px;top:781.4px" width="16" height="16" viewBox="0 0 24 24" fill="none" stroke="#f87171" stroke-width="1.8" stroke-linecap="round" stroke-linejoin="round"><polyline points="22 7 13.5 15.5 8.5 10.5 2 17"/><polyline points="16 7 22 7 22 13"/></svg><div id="t53" style="position:absolute;left:1024.2px;top:779.56px;font-size:19.3px;line-height:1;font-weight:400;color:#f87171;letter-spacing:0.000px;white-space:nowrap;-webkit-text-stroke:0.3px #f87171;">8.7%</div><div id="t54" style="position:absolute;left:1126.3px;top:748.83px;font-size:21.7px;line-height:1;font-weight:400;color:#f3f4f6;letter-spacing:-0.281px;white-space:nowrap;-webkit-text-stroke:0.3px #f3f4f6;">Honeywell Aerospace</div><svg style="position:absolute;left:1126px;top:785.2px" width="16" height="16" viewBox="0 0 24 24" fill="none" stroke="#facc15" stroke-width="2" stroke-linecap="round" stroke-linejoin="round"><path d="m15.477 12.89 1.515 8.526a.5.5 0 0 1-.81.47l-3.58-2.687a1 1 0 0 0-1.197 0l-3.586 2.686a.5.5 0 0 1-.81-.469l1.514-8.526"/><circle cx="12" cy="8" r="6"/></svg><div id="t55" style="position:absolute;left:1147.5px;top:783.66px;font-size:19.3px;line-height:1;font-weight:400;color:#9aa3b6;letter-spacing:-0.245px;white-space:nowrap;-webkit-text-stroke:0.3px #9aa3b6;">4.8/5.0</div><svg style="position:absolute;left:1420.6px;top:763.1px" width="21.8" height="21.8" viewBox="0 0 24 24" fill="none" stroke="#9aa3b6" stroke-width="1.8" stroke-linecap="round" stroke-linejoin="round"><circle cx="12" cy="12" r="10"/><polyline points="12 6 12 12 16 14"/></svg><div id="t56" style="position:absolute;left:1452.9px;top:763.68px;font-size:22px;line-height:1;font-weight:400;color:#d1d5db;letter-spacing:-0.127px;white-space:nowrap;-webkit-text-stroke:0.3px #d1d5db;">2-4 days</div><div style="position:absolute;left:1585.5px;top:742.5px;width:53.59999999999991px;height:28.5px;box-sizing:border-box;border-radius:9px;background:#141a30;border:1px solid #2a3663;color:#6aa6f6;font-size:16px;font-weight:700;letter-spacing:-0.6px;text-indent:-0.6px;text-align:center;line-height:28.5px;padding-top:0px">FAA</div><div style="position:absolute;left:1645.1px;top:742.5px;width:64.29999999999995px;height:28.5px;box-sizing:border-box;border-radius:9px;background:#141a30;border:1px solid #2a3663;color:#6aa6f6;font-size:16px;font-weight:700;letter-spacing:-0.6px;text-indent:-0.6px;text-align:center;line-height:28.5px;padding-top:0px">EASA</div><div style="position:absolute;left:1715.3999999999999px;top:742.5px;width:82.09999999999991px;height:28.5px;box-sizing:border-box;border-radius:9px;background:#141a30;border:1px solid #2a3663;color:#6aa6f6;font-size:16px;font-weight:700;letter-spacing:-0.6px;text-indent:-0.6px;text-align:center;line-height:28.5px;padding-top:0px">AS9100</div><div style="position:absolute;left:1585.5px;top:777px;width:87.5px;height:28.5px;box-sizing:border-box;border-radius:9px;background:#141a30;border:1px solid #2a3663;color:#6aa6f6;font-size:16px;font-weight:700;letter-spacing:-0.6px;text-indent:-0.6px;text-align:center;line-height:28.5px;padding-top:0px">ISO9001</div><div style="position:absolute;left:1929.4px;top:761px;width:108.8px;height:34px;box-sizing:border-box;border-radius:6px;background:#261944;border:1px solid #51308a"></div><svg style="position:absolute;left:1939px;top:770.5px" width="16" height="16" viewBox="0 0 24 24" fill="none" stroke="#c084fc" stroke-width="2" stroke-linecap="round" stroke-linejoin="round"><path d="M9.937 15.5A2 2 0 0 0 8.5 14.063l-6.135-1.582a.5.5 0 0 1 0-.962L8.5 9.936A2 2 0 0 0 9.937 8.5l1.582-6.135a.5.5 0 0 1 .963 0L14.063 8.5A2 2 0 0 0 15.5 9.937l6.135 1.581a.5.5 0 0 1 0 .964L15.5 14.063a2 2 0 0 0-1.437 1.437l-1.582 6.135a.5.5 0 0 1-.963 0z"/><path d="M20 3v4"/><path d="M22 5h-4"/><path d="M4 17v2"/><path d="M5 18H3"/></svg><div id="t57" style="position:absolute;left:1958px;top:769.26px;font-size:18px;line-height:1;font-weight:400;color:#c084fc;letter-spacing:0.053px;white-space:nowrap;-webkit-text-stroke:0.3px #c084fc;">AI Match</div><div style="position:absolute;left:2049px;top:762px;width:86.3px;height:34px;box-sizing:border-box;border-radius:6px;background:#132839;border:1px solid #1f4a5c"></div><svg style="position:absolute;left:2061px;top:771px" width="16" height="16" viewBox="0 0 24 24" fill="none" stroke="#4fd1e8" stroke-width="2" stroke-linecap="round" stroke-linejoin="round"><path d="M9 17H7A5 5 0 0 1 7 7h2"/><path d="M15 7h2a5 5 0 1 1 0 10h-2"/><line x1="8" x2="16" y1="12" y2="12"/></svg><div id="t58" style="position:absolute;left:2081.8px;top:770.98px;font-size:16.8px;line-height:1;font-weight:400;color:#4fd1e8;letter-spacing:0.000px;white-space:nowrap;-webkit-text-stroke:0.3px #4fd1e8;">Chain</div><svg style="position:absolute;left:378.5px;top:863.7px;border-radius:11px;box-shadow:0 0 5px 1px rgba(0,0,0,.45)" width="63" height="63" viewBox="0 0 64 64"><rect width="64" height="64" fill="#0a0a0e"/>
<rect x="0" y="0" width="64" height="22" fill="url(#hd)" mask="url(#hm)" opacity=".7"/><g filter="url(#bl)"><ellipse cx="21.1" cy="30.7" rx="1.6" ry="1.8" fill="#d8d2f0" opacity="0.82"/><ellipse cx="6.8" cy="34.5" rx="1.9" ry="2.1" fill="#b9a8f0" opacity="0.47"/><ellipse cx="27.9" cy="29.9" rx="1.0" ry="1.1" fill="#e8e4f5" opacity="0.48"/><ellipse cx="36.1" cy="36.7" rx="1.6" ry="1.8" fill="#8f7ad8" opacity="0.88"/><ellipse cx="36.8" cy="32.3" rx="2.0" ry="2.2" fill="#d8d2f0" opacity="0.70"/><ellipse cx="9.3" cy="33.1" rx="1.5" ry="1.6" fill="#8f7ad8" opacity="0.59"/><ellipse cx="51.6" cy="30.2" rx="1.5" ry="1.7" fill="#b9a8f0" opacity="0.62"/><ellipse cx="35.0" cy="29.7" rx="1.0" ry="1.1" fill="#b9a8f0" opacity="0.67"/><ellipse cx="34.0" cy="35.4" rx="1.4" ry="1.6" fill="#e8e4f5" opacity="0.61"/><ellipse cx="16.4" cy="31.0" rx="1.8" ry="1.9" fill="#d8d2f0" opacity="0.71"/><ellipse cx="33.6" cy="36.2" rx="1.7" ry="1.9" fill="#9d86e8" opacity="0.72"/><ellipse cx="5.5" cy="34.0" rx="1.1" ry="1.2" fill="#9d86e8" opacity="0.52"/><ellipse cx="31.3" cy="29.6" rx="1.6" ry="1.8" fill="#8f7ad8" opacity="0.71"/><ellipse cx="55.3" cy="31.2" rx="1.7" ry="1.8" fill="#8f7ad8" opacity="0.67"/><ellipse cx="50.4" cy="29.3" rx="1.0" ry="1.1" fill="#9d86e8" opacity="0.66"/><ellipse cx="42.2" cy="29.5" rx="1.7" ry="1.8" fill="#8f7ad8" opacity="0.90"/><ellipse cx="52.0" cy="31.0" rx="1.3" ry="1.5" fill="#9d86e8" opacity="0.46"/><ellipse cx="29.6" cy="30.6" rx="1.0" ry="1.1" fill="#d8d2f0" opacity="0.55"/><ellipse cx="18.8" cy="35.5" rx="1.3" ry="1.5" fill="#e8e4f5" opacity="0.49"/><ellipse cx="28.8" cy="33.7" rx="1.9" ry="2.1" fill="#e8e4f5" opacity="0.84"/><ellipse cx="18.3" cy="32.9" rx="1.3" ry="1.4" fill="#e8e4f5" opacity="0.88"/><ellipse cx="10.4" cy="31.2" rx="1.2" ry="1.3" fill="#b9a8f0" opacity="0.46"/><ellipse cx="52.5" cy="30.2" rx="1.2" ry="1.3" fill="#b9a8f0" opacity="0.64"/><ellipse cx="23.9" cy="34.0" rx="1.9" ry="2.1" fill="#8f7ad8" opacity="0.88"/><ellipse cx="41.6" cy="34.9" rx="1.4" ry="1.5" fill="#8f7ad8" opacity="0.63"/><ellipse cx="25.7" cy="30.2" rx="1.6" ry="1.8" fill="#d8d2f0" opacity="0.54"/><ellipse cx="62.0" cy="32.0" rx="1.0" ry="1.1" fill="#8f7ad8" opacity="0.47"/><ellipse cx="1.0" cy="31.2" rx="1.0" ry="1.1" fill="#9d86e8" opacity="0.73"/><ellipse cx="5.4" cy="31.5" rx="1.3" ry="1.4" fill="#9d86e8" opacity="0.88"/><ellipse cx="38.3" cy="32.9" rx="1.0" ry="1.1" fill="#e8e4f5" opacity="0.90"/><ellipse cx="29.9" cy="33.2" rx="1.0" ry="1.1" fill="#d8d2f0" opacity="0.79"/><ellipse cx="46.9" cy="32.7" rx="1.7" ry="1.8" fill="#8f7ad8" opacity="0.46"/><ellipse cx="60.0" cy="32.8" rx="1.1" ry="1.2" fill="#8f7ad8" opacity="0.86"/><ellipse cx="48.0" cy="31.2" rx="1.6" ry="1.8" fill="#d8d2f0" opacity="0.76"/><ellipse cx="7" cy="39" rx="3" ry="2.5" fill="#6c5cc0" opacity="0.7"/><ellipse cx="16" cy="38.5" rx="3.5" ry="3" fill="#8a78e0" opacity="0.75"/><ellipse cx="27" cy="40" rx="3" ry="2.6" fill="#5a4ca8" opacity="0.6"/><ellipse cx="40" cy="39" rx="3.2" ry="2.6" fill="#7a68d0" opacity="0.6"/><ellipse cx="50" cy="40" rx="3" ry="2.5" fill="#5c5470" opacity="0.6"/><ellipse cx="58" cy="36.5" rx="3" ry="2.6" fill="#3a78d8" opacity="0.9"/><ellipse cx="24" cy="56" rx="3.4" ry="3" fill="#8a78e0" opacity="0.8"/><ellipse cx="38" cy="53" rx="2.6" ry="2" fill="#7a68d0" opacity="0.7"/><ellipse cx="12" cy="50" rx="4" ry="3" fill="#1c1838" opacity="0.9"/><ellipse cx="55" cy="52" rx="2" ry="1.2" fill="#c0bcd0" opacity="0.5"/><path d="M10 40 L26 62 M34 42 L44 56" stroke="#3a3650" stroke-width="1.2" opacity=".7"/></g></svg><div id="t59" style="position:absolute;left:457.3px;top:873.03px;font-size:21.7px;line-height:1;font-weight:400;color:#f3f4f6;letter-spacing:-0.352px;white-space:nowrap;-webkit-text-stroke:0.3px #f3f4f6;">Fuel System Pump Assembly</div><div id="t60" style="position:absolute;left:457.3px;top:902.09px;font-size:19.5px;line-height:1;font-weight:400;color:#9aa3b6;letter-spacing:-0.464px;white-space:nowrap;-webkit-text-stroke:0.3px #9aa3b6;">FU-PMP-4512C</div><svg style="position:absolute;left:800.55px;top:869.15px" width="21.9" height="21.9" viewBox="0 0 24 24" fill="none" stroke="#4ade80" stroke-width="2" stroke-linecap="round" stroke-linejoin="round"><circle cx="12" cy="12" r="10"/><path d="m9 12 2 2 4-4"/></svg><div id="t61" style="position:absolute;left:832.7px;top:870.02px;font-size:21.6px;line-height:1;font-weight:400;color:#4ade80;letter-spacing:-0.245px;white-space:nowrap;-webkit-text-stroke:0.3px #4ade80;">In Stock</div><div id="t62" style="position:absolute;left:801.5px;top:905.99px;font-size:19.5px;line-height:1;font-weight:400;color:#9aa3b6;letter-spacing:-0.087px;white-space:nowrap;-webkit-text-stroke:0.3px #9aa3b6;">34 units</div><div id="t63" style="position:absolute;left:1003.4px;top:873.23px;font-size:21.7px;line-height:1;font-weight:400;color:#f3f4f6;letter-spacing:0.271px;white-space:nowrap;-webkit-text-stroke:0.3px #f3f4f6;">$6 780</div><svg style="position:absolute;left:1002.8px;top:903.2px" width="16" height="16" viewBox="0 0 24 24" fill="none" stroke="#4ade80" stroke-width="1.8" stroke-linecap="round" stroke-linejoin="round"><polyline points="22 17 13.5 8.5 8.5 13.5 2 7"/><polyline points="16 17 22 17 22 11"/></svg><div id="t64" style="position:absolute;left:1024.2px;top:901.36px;font-size:19.3px;line-height:1;font-weight:400;color:#4ade80;letter-spacing:0.000px;white-space:nowrap;-webkit-text-stroke:0.3px #4ade80;">1.3%</div><div id="t65" style="position:absolute;left:1126.3px;top:870.23px;font-size:21.7px;line-height:1;font-weight:400;color:#f3f4f6;letter-spacing:-0.294px;white-space:nowrap;-webkit-text-stroke:0.3px #f3f4f6;">Collins Aerospace</div><svg style="position:absolute;left:1126px;top:906.6px" width="16" height="16" viewBox="0 0 24 24" fill="none" stroke="#facc15" stroke-width="2" stroke-linecap="round" stroke-linejoin="round"><path d="m15.477 12.89 1.515 8.526a.5.5 0 0 1-.81.47l-3.58-2.687a1 1 0 0 0-1.197 0l-3.586 2.686a.5.5 0 0 1-.81-.469l1.514-8.526"/><circle cx="12" cy="8" r="6"/></svg><div id="t66" style="position:absolute;left:1147.5px;top:905.06px;font-size:19.3px;line-height:1;font-weight:400;color:#9aa3b6;letter-spacing:-0.245px;white-space:nowrap;-webkit-text-stroke:0.3px #9aa3b6;">4.9/5.0</div><svg style="position:absolute;left:1420.6px;top:884.7px" width="21.8" height="21.8" viewBox="0 0 24 24" fill="none" stroke="#9aa3b6" stroke-width="1.8" stroke-linecap="round" stroke-linejoin="round"><circle cx="12" cy="12" r="10"/><polyline points="12 6 12 12 16 14"/></svg><div id="t67" style="position:absolute;left:1452.9px;top:884.68px;font-size:22px;line-height:1;font-weight:400;color:#d1d5db;letter-spacing:-0.027px;white-space:nowrap;-webkit-text-stroke:0.3px #d1d5db;">4-6 days</div><div style="position:absolute;left:1585.5px;top:881.6px;width:53.59999999999991px;height:28.5px;box-sizing:border-box;border-radius:9px;background:#141a30;border:1px solid #2a3663;color:#6aa6f6;font-size:16px;font-weight:700;letter-spacing:-0.6px;text-indent:-0.6px;text-align:center;line-height:28.5px;padding-top:0px">FAA</div><div style="position:absolute;left:1645.1px;top:881.6px;width:64.29999999999995px;height:28.5px;box-sizing:border-box;border-radius:9px;background:#141a30;border:1px solid #2a3663;color:#6aa6f6;font-size:16px;font-weight:700;letter-spacing:-0.6px;text-indent:-0.6px;text-align:center;line-height:28.5px;padding-top:0px">EASA</div><div style="position:absolute;left:1715.3999999999999px;top:881.6px;width:82.09999999999991px;height:28.5px;box-sizing:border-box;border-radius:9px;background:#141a30;border:1px solid #2a3663;color:#6aa6f6;font-size:16px;font-weight:700;letter-spacing:-0.6px;text-indent:-0.6px;text-align:center;line-height:28.5px;padding-top:0px">AS9100</div><div style="position:absolute;left:1929.4px;top:879px;width:86.3px;height:34px;box-sizing:border-box;border-radius:6px;background:#132839;border:1px solid #1f4a5c"></div><svg style="position:absolute;left:1941.4px;top:888px" width="16" height="16" viewBox="0 0 24 24" fill="none" stroke="#4fd1e8" stroke-width="2" stroke-linecap="round" stroke-linejoin="round"><path d="M9 17H7A5 5 0 0 1 7 7h2"/><path d="M15 7h2a5 5 0 1 1 0 10h-2"/><line x1="8" x2="16" y1="12" y2="12"/></svg><div id="t68" style="position:absolute;left:1962.2px;top:887.98px;font-size:16.8px;line-height:1;font-weight:400;color:#4fd1e8;letter-spacing:0.000px;white-space:nowrap;-webkit-text-stroke:0.3px #4fd1e8;">Chain</div><svg style="position:absolute;left:378.5px;top:969.5px;border-radius:11px;box-shadow:0 0 5px 1px rgba(0,0,0,.45)" width="63" height="63" viewBox="0 0 64 64"><rect width="64" height="64" fill="#0a0a0e"/>
<rect x="0" y="0" width="64" height="22" fill="url(#hd)" mask="url(#hm)" opacity=".7"/><g filter="url(#bl)"><ellipse cx="21.1" cy="30.7" rx="1.6" ry="1.8" fill="#d8d2f0" opacity="0.82"/><ellipse cx="6.8" cy="34.5" rx="1.9" ry="2.1" fill="#b9a8f0" opacity="0.47"/><ellipse cx="27.9" cy="29.9" rx="1.0" ry="1.1" fill="#e8e4f5" opacity="0.48"/><ellipse cx="36.1" cy="36.7" rx="1.6" ry="1.8" fill="#8f7ad8" opacity="0.88"/><ellipse cx="36.8" cy="32.3" rx="2.0" ry="2.2" fill="#d8d2f0" opacity="0.70"/><ellipse cx="9.3" cy="33.1" rx="1.5" ry="1.6" fill="#8f7ad8" opacity="0.59"/><ellipse cx="51.6" cy="30.2" rx="1.5" ry="1.7" fill="#b9a8f0" opacity="0.62"/><ellipse cx="35.0" cy="29.7" rx="1.0" ry="1.1" fill="#b9a8f0" opacity="0.67"/><ellipse cx="34.0" cy="35.4" rx="1.4" ry="1.6" fill="#e8e4f5" opacity="0.61"/><ellipse cx="16.4" cy="31.0" rx="1.8" ry="1.9" fill="#d8d2f0" opacity="0.71"/><ellipse cx="33.6" cy="36.2" rx="1.7" ry="1.9" fill="#9d86e8" opacity="0.72"/><ellipse cx="5.5" cy="34.0" rx="1.1" ry="1.2" fill="#9d86e8" opacity="0.52"/><ellipse cx="31.3" cy="29.6" rx="1.6" ry="1.8" fill="#8f7ad8" opacity="0.71"/><ellipse cx="55.3" cy="31.2" rx="1.7" ry="1.8" fill="#8f7ad8" opacity="0.67"/><ellipse cx="50.4" cy="29.3" rx="1.0" ry="1.1" fill="#9d86e8" opacity="0.66"/><ellipse cx="42.2" cy="29.5" rx="1.7" ry="1.8" fill="#8f7ad8" opacity="0.90"/><ellipse cx="52.0" cy="31.0" rx="1.3" ry="1.5" fill="#9d86e8" opacity="0.46"/><ellipse cx="29.6" cy="30.6" rx="1.0" ry="1.1" fill="#d8d2f0" opacity="0.55"/><ellipse cx="18.8" cy="35.5" rx="1.3" ry="1.5" fill="#e8e4f5" opacity="0.49"/><ellipse cx="28.8" cy="33.7" rx="1.9" ry="2.1" fill="#e8e4f5" opacity="0.84"/><ellipse cx="18.3" cy="32.9" rx="1.3" ry="1.4" fill="#e8e4f5" opacity="0.88"/><ellipse cx="10.4" cy="31.2" rx="1.2" ry="1.3" fill="#b9a8f0" opacity="0.46"/><ellipse cx="52.5" cy="30.2" rx="1.2" ry="1.3" fill="#b9a8f0" opacity="0.64"/><ellipse cx="23.9" cy="34.0" rx="1.9" ry="2.1" fill="#8f7ad8" opacity="0.88"/><ellipse cx="41.6" cy="34.9" rx="1.4" ry="1.5" fill="#8f7ad8" opacity="0.63"/><ellipse cx="25.7" cy="30.2" rx="1.6" ry="1.8" fill="#d8d2f0" opacity="0.54"/><ellipse cx="62.0" cy="32.0" rx="1.0" ry="1.1" fill="#8f7ad8" opacity="0.47"/><ellipse cx="1.0" cy="31.2" rx="1.0" ry="1.1" fill="#9d86e8" opacity="0.73"/><ellipse cx="5.4" cy="31.5" rx="1.3" ry="1.4" fill="#9d86e8" opacity="0.88"/><ellipse cx="38.3" cy="32.9" rx="1.0" ry="1.1" fill="#e8e4f5" opacity="0.90"/><ellipse cx="29.9" cy="33.2" rx="1.0" ry="1.1" fill="#d8d2f0" opacity="0.79"/><ellipse cx="46.9" cy="32.7" rx="1.7" ry="1.8" fill="#8f7ad8" opacity="0.46"/><ellipse cx="60.0" cy="32.8" rx="1.1" ry="1.2" fill="#8f7ad8" opacity="0.86"/><ellipse cx="48.0" cy="31.2" rx="1.6" ry="1.8" fill="#d8d2f0" opacity="0.76"/><ellipse cx="7" cy="39" rx="3" ry="2.5" fill="#6c5cc0" opacity="0.7"/><ellipse cx="16" cy="38.5" rx="3.5" ry="3" fill="#8a78e0" opacity="0.75"/><ellipse cx="27" cy="40" rx="3" ry="2.6" fill="#5a4ca8" opacity="0.6"/><ellipse cx="40" cy="39" rx="3.2" ry="2.6" fill="#7a68d0" opacity="0.6"/><ellipse cx="50" cy="40" rx="3" ry="2.5" fill="#5c5470" opacity="0.6"/><ellipse cx="58" cy="36.5" rx="3" ry="2.6" fill="#3a78d8" opacity="0.9"/><ellipse cx="24" cy="56" rx="3.4" ry="3" fill="#8a78e0" opacity="0.8"/><ellipse cx="38" cy="53" rx="2.6" ry="2" fill="#7a68d0" opacity="0.7"/><ellipse cx="12" cy="50" rx="4" ry="3" fill="#1c1838" opacity="0.9"/><ellipse cx="55" cy="52" rx="2" ry="1.2" fill="#c0bcd0" opacity="0.5"/><path d="M10 40 L26 62 M34 42 L44 56" stroke="#3a3650" stroke-width="1.2" opacity=".7"/></g></svg><div id="t69" style="position:absolute;left:457.3px;top:979.23px;font-size:21.7px;line-height:1;font-weight:400;color:#f3f4f6;letter-spacing:-0.386px;white-space:nowrap;-webkit-text-stroke:0.3px #f3f4f6;">Wing Leading Edge Slat</div><div id="t70" style="position:absolute;left:457.3px;top:1008.19px;font-size:19.5px;line-height:1;font-weight:400;color:#9aa3b6;letter-spacing:-0.108px;white-space:nowrap;-webkit-text-stroke:0.3px #9aa3b6;">WG-SLT-8843A</div><svg style="position:absolute;left:800.55px;top:975.35px" width="21.9" height="21.9" viewBox="0 0 24 24" fill="none" stroke="#4ade80" stroke-width="2" stroke-linecap="round" stroke-linejoin="round"><circle cx="12" cy="12" r="10"/><path d="m9 12 2 2 4-4"/></svg><div id="t71" style="position:absolute;left:832.7px;top:976.22px;font-size:21.6px;line-height:1;font-weight:400;color:#4ade80;letter-spacing:-0.245px;white-space:nowrap;-webkit-text-stroke:0.3px #4ade80;">In Stock</div><div id="t72" style="position:absolute;left:801.5px;top:1012.29px;font-size:19.5px;line-height:1;font-weight:400;color:#9aa3b6;letter-spacing:-0.600px;white-space:nowrap;-webkit-text-stroke:0.3px #9aa3b6;">12 units</div><div id="t73" style="position:absolute;left:1003.4px;top:979.43px;font-size:21.7px;line-height:1;font-weight:400;color:#f3f4f6;letter-spacing:0.232px;white-space:nowrap;-webkit-text-stroke:0.3px #f3f4f6;">$22 300</div><svg style="position:absolute;left:1002.8px;top:1009.3px" width="16" height="16" viewBox="0 0 24 24" fill="none" stroke="#f87171" stroke-width="1.8" stroke-linecap="round" stroke-linejoin="round"><polyline points="22 7 13.5 15.5 8.5 10.5 2 17"/><polyline points="16 7 22 7 22 13"/></svg><div id="t74" style="position:absolute;left:1024.2px;top:1007.46px;font-size:19.3px;line-height:1;font-weight:400;color:#f87171;letter-spacing:0.000px;white-space:nowrap;-webkit-text-stroke:0.3px #f87171;">3.4%</div><div id="t75" style="position:absolute;left:1126.3px;top:976.33px;font-size:21.7px;line-height:1;font-weight:400;color:#f3f4f6;letter-spacing:-0.212px;white-space:nowrap;-webkit-text-stroke:0.3px #f3f4f6;">Boeing Supply Network</div><svg style="position:absolute;left:1126px;top:1012.7px" width="16" height="16" viewBox="0 0 24 24" fill="none" stroke="#facc15" stroke-width="2" stroke-linecap="round" stroke-linejoin="round"><path d="m15.477 12.89 1.515 8.526a.5.5 0 0 1-.81.47l-3.58-2.687a1 1 0 0 0-1.197 0l-3.586 2.686a.5.5 0 0 1-.81-.469l1.514-8.526"/><circle cx="12" cy="8" r="6"/></svg><div id="t76" style="position:absolute;left:1147.5px;top:1011.16px;font-size:19.3px;line-height:1;font-weight:400;color:#9aa3b6;letter-spacing:-0.245px;white-space:nowrap;-webkit-text-stroke:0.3px #9aa3b6;">4.8/5.0</div><svg style="position:absolute;left:1420.6px;top:990.7px" width="21.8" height="21.8" viewBox="0 0 24 24" fill="none" stroke="#9aa3b6" stroke-width="1.8" stroke-linecap="round" stroke-linejoin="round"><circle cx="12" cy="12" r="10"/><polyline points="12 6 12 12 16 14"/></svg><div id="t77" style="position:absolute;left:1452.9px;top:975.68px;font-size:22px;line-height:1;font-weight:400;color:#d1d5db;letter-spacing:-0.600px;white-space:nowrap;-webkit-text-stroke:0.3px #d1d5db;">7-10</div><div id="t78" style="position:absolute;left:1452.9px;top:1005.88px;font-size:22px;line-height:1;font-weight:400;color:#d1d5db;letter-spacing:-0.600px;white-space:nowrap;-webkit-text-stroke:0.3px #d1d5db;">days</div><div style="position:absolute;left:1585.5px;top:987.7px;width:53.59999999999991px;height:28.5px;box-sizing:border-box;border-radius:9px;background:#141a30;border:1px solid #2a3663;color:#6aa6f6;font-size:16px;font-weight:700;letter-spacing:-0.6px;text-indent:-0.6px;text-align:center;line-height:28.5px;padding-top:0px">FAA</div><div style="position:absolute;left:1645.1px;top:987.7px;width:64.29999999999995px;height:28.5px;box-sizing:border-box;border-radius:9px;background:#141a30;border:1px solid #2a3663;color:#6aa6f6;font-size:16px;font-weight:700;letter-spacing:-0.6px;text-indent:-0.6px;text-align:center;line-height:28.5px;padding-top:0px">EASA</div><div style="position:absolute;left:1929.4px;top:985.8px;width:108.8px;height:34px;box-sizing:border-box;border-radius:6px;background:#261944;border:1px solid #51308a"></div><svg style="position:absolute;left:1939px;top:995.3px" width="16" height="16" viewBox="0 0 24 24" fill="none" stroke="#c084fc" stroke-width="2" stroke-linecap="round" stroke-linejoin="round"><path d="M9.937 15.5A2 2 0 0 0 8.5 14.063l-6.135-1.582a.5.5 0 0 1 0-.962L8.5 9.936A2 2 0 0 0 9.937 8.5l1.582-6.135a.5.5 0 0 1 .963 0L14.063 8.5A2 2 0 0 0 15.5 9.937l6.135 1.581a.5.5 0 0 1 0 .964L15.5 14.063a2 2 0 0 0-1.437 1.437l-1.582 6.135a.5.5 0 0 1-.963 0z"/><path d="M20 3v4"/><path d="M22 5h-4"/><path d="M4 17v2"/><path d="M5 18H3"/></svg><div id="t79" style="position:absolute;left:1958px;top:994.06px;font-size:18px;line-height:1;font-weight:400;color:#c084fc;letter-spacing:0.053px;white-space:nowrap;-webkit-text-stroke:0.3px #c084fc;">AI Match</div><div style="position:absolute;left:2049px;top:987px;width:86.3px;height:34px;box-sizing:border-box;border-radius:6px;background:#132839;border:1px solid #1f4a5c"></div><svg style="position:absolute;left:2061px;top:996px" width="16" height="16" viewBox="0 0 24 24" fill="none" stroke="#4fd1e8" stroke-width="2" stroke-linecap="round" stroke-linejoin="round"><path d="M9 17H7A5 5 0 0 1 7 7h2"/><path d="M15 7h2a5 5 0 1 1 0 10h-2"/><line x1="8" x2="16" y1="12" y2="12"/></svg><div id="t80" style="position:absolute;left:2081.8px;top:995.98px;font-size:16.8px;line-height:1;font-weight:400;color:#4fd1e8;letter-spacing:0.000px;white-space:nowrap;-webkit-text-stroke:0.3px #4fd1e8;">Chain</div><svg style="position:absolute;left:378.5px;top:1075.5px;border-radius:11px;box-shadow:0 0 5px 1px rgba(0,0,0,.45)" width="63" height="63" viewBox="0 0 64 64"><rect width="64" height="64" fill="#0a0a0e"/>
<rect x="0" y="0" width="64" height="22" fill="url(#hd)" mask="url(#hm)" opacity=".7"/><g filter="url(#bl)"><ellipse cx="21.1" cy="30.7" rx="1.6" ry="1.8" fill="#d8d2f0" opacity="0.82"/><ellipse cx="6.8" cy="34.5" rx="1.9" ry="2.1" fill="#b9a8f0" opacity="0.47"/><ellipse cx="27.9" cy="29.9" rx="1.0" ry="1.1" fill="#e8e4f5" opacity="0.48"/><ellipse cx="36.1" cy="36.7" rx="1.6" ry="1.8" fill="#8f7ad8" opacity="0.88"/><ellipse cx="36.8" cy="32.3" rx="2.0" ry="2.2" fill="#d8d2f0" opacity="0.70"/><ellipse cx="9.3" cy="33.1" rx="1.5" ry="1.6" fill="#8f7ad8" opacity="0.59"/><ellipse cx="51.6" cy="30.2" rx="1.5" ry="1.7" fill="#b9a8f0" opacity="0.62"/><ellipse cx="35.0" cy="29.7" rx="1.0" ry="1.1" fill="#b9a8f0" opacity="0.67"/><ellipse cx="34.0" cy="35.4" rx="1.4" ry="1.6" fill="#e8e4f5" opacity="0.61"/><ellipse cx="16.4" cy="31.0" rx="1.8" ry="1.9" fill="#d8d2f0" opacity="0.71"/><ellipse cx="33.6" cy="36.2" rx="1.7" ry="1.9" fill="#9d86e8" opacity="0.72"/><ellipse cx="5.5" cy="34.0" rx="1.1" ry="1.2" fill="#9d86e8" opacity="0.52"/><ellipse cx="31.3" cy="29.6" rx="1.6" ry="1.8" fill="#8f7ad8" opacity="0.71"/><ellipse cx="55.3" cy="31.2" rx="1.7" ry="1.8" fill="#8f7ad8" opacity="0.67"/><ellipse cx="50.4" cy="29.3" rx="1.0" ry="1.1" fill="#9d86e8" opacity="0.66"/><ellipse cx="42.2" cy="29.5" rx="1.7" ry="1.8" fill="#8f7ad8" opacity="0.90"/><ellipse cx="52.0" cy="31.0" rx="1.3" ry="1.5" fill="#9d86e8" opacity="0.46"/><ellipse cx="29.6" cy="30.6" rx="1.0" ry="1.1" fill="#d8d2f0" opacity="0.55"/><ellipse cx="18.8" cy="35.5" rx="1.3" ry="1.5" fill="#e8e4f5" opacity="0.49"/><ellipse cx="28.8" cy="33.7" rx="1.9" ry="2.1" fill="#e8e4f5" opacity="0.84"/><ellipse cx="18.3" cy="32.9" rx="1.3" ry="1.4" fill="#e8e4f5" opacity="0.88"/><ellipse cx="10.4" cy="31.2" rx="1.2" ry="1.3" fill="#b9a8f0" opacity="0.46"/><ellipse cx="52.5" cy="30.2" rx="1.2" ry="1.3" fill="#b9a8f0" opacity="0.64"/><ellipse cx="23.9" cy="34.0" rx="1.9" ry="2.1" fill="#8f7ad8" opacity="0.88"/><ellipse cx="41.6" cy="34.9" rx="1.4" ry="1.5" fill="#8f7ad8" opacity="0.63"/><ellipse cx="25.7" cy="30.2" rx="1.6" ry="1.8" fill="#d8d2f0" opacity="0.54"/><ellipse cx="62.0" cy="32.0" rx="1.0" ry="1.1" fill="#8f7ad8" opacity="0.47"/><ellipse cx="1.0" cy="31.2" rx="1.0" ry="1.1" fill="#9d86e8" opacity="0.73"/><ellipse cx="5.4" cy="31.5" rx="1.3" ry="1.4" fill="#9d86e8" opacity="0.88"/><ellipse cx="38.3" cy="32.9" rx="1.0" ry="1.1" fill="#e8e4f5" opacity="0.90"/><ellipse cx="29.9" cy="33.2" rx="1.0" ry="1.1" fill="#d8d2f0" opacity="0.79"/><ellipse cx="46.9" cy="32.7" rx="1.7" ry="1.8" fill="#8f7ad8" opacity="0.46"/><ellipse cx="60.0" cy="32.8" rx="1.1" ry="1.2" fill="#8f7ad8" opacity="0.86"/><ellipse cx="48.0" cy="31.2" rx="1.6" ry="1.8" fill="#d8d2f0" opacity="0.76"/><ellipse cx="7" cy="39" rx="3" ry="2.5" fill="#6c5cc0" opacity="0.7"/><ellipse cx="16" cy="38.5" rx="3.5" ry="3" fill="#8a78e0" opacity="0.75"/><ellipse cx="27" cy="40" rx="3" ry="2.6" fill="#5a4ca8" opacity="0.6"/><ellipse cx="40" cy="39" rx="3.2" ry="2.6" fill="#7a68d0" opacity="0.6"/><ellipse cx="50" cy="40" rx="3" ry="2.5" fill="#5c5470" opacity="0.6"/><ellipse cx="58" cy="36.5" rx="3" ry="2.6" fill="#3a78d8" opacity="0.9"/><ellipse cx="24" cy="56" rx="3.4" ry="3" fill="#8a78e0" opacity="0.8"/><ellipse cx="38" cy="53" rx="2.6" ry="2" fill="#7a68d0" opacity="0.7"/><ellipse cx="12" cy="50" rx="4" ry="3" fill="#1c1838" opacity="0.9"/><ellipse cx="55" cy="52" rx="2" ry="1.2" fill="#c0bcd0" opacity="0.5"/><path d="M10 40 L26 62 M34 42 L44 56" stroke="#3a3650" stroke-width="1.2" opacity=".7"/></g></svg><div id="t81" style="position:absolute;left:457.3px;top:1085.33px;font-size:21.7px;line-height:1;font-weight:400;color:#f3f4f6;letter-spacing:-0.400px;white-space:nowrap;-webkit-text-stroke:0.3px #f3f4f6;">Carbon Brake Disc Set</div><div id="t82" style="position:absolute;left:457.3px;top:1114.39px;font-size:19.5px;line-height:1;font-weight:400;color:#9aa3b6;letter-spacing:-0.422px;white-space:nowrap;-webkit-text-stroke:0.3px #9aa3b6;">BR-DSC-3291P</div><svg style="position:absolute;left:800.55px;top:1081.45px" width="21.9" height="21.9" viewBox="0 0 24 24" fill="none" stroke="#4ade80" stroke-width="2" stroke-linecap="round" stroke-linejoin="round"><circle cx="12" cy="12" r="10"/><path d="m9 12 2 2 4-4"/></svg><div id="t83" style="position:absolute;left:832.7px;top:1082.32px;font-size:21.6px;line-height:1;font-weight:400;color:#4ade80;letter-spacing:-0.245px;white-space:nowrap;-webkit-text-stroke:0.3px #4ade80;">In Stock</div><div id="t84" style="position:absolute;left:801.5px;top:1118.29px;font-size:19.5px;line-height:1;font-weight:400;color:#9aa3b6;letter-spacing:-0.188px;white-space:nowrap;-webkit-text-stroke:0.3px #9aa3b6;">56 units</div><div id="t85" style="position:absolute;left:1003.4px;top:1085.53px;font-size:21.7px;line-height:1;font-weight:400;color:#f3f4f6;letter-spacing:0.331px;white-space:nowrap;-webkit-text-stroke:0.3px #f3f4f6;">$4 250</div><svg style="position:absolute;left:1002.8px;top:1115.5px" width="16" height="16" viewBox="0 0 24 24" fill="none" stroke="#4ade80" stroke-width="1.8" stroke-linecap="round" stroke-linejoin="round"><polyline points="22 17 13.5 8.5 8.5 13.5 2 7"/><polyline points="16 17 22 17 22 11"/></svg><div id="t86" style="position:absolute;left:1024.2px;top:1113.66px;font-size:19.3px;line-height:1;font-weight:400;color:#4ade80;letter-spacing:0.000px;white-space:nowrap;-webkit-text-stroke:0.3px #4ade80;">0.8%</div><div id="t87" style="position:absolute;left:1126.3px;top:1082.03px;font-size:21.7px;line-height:1;font-weight:400;color:#f3f4f6;letter-spacing:-0.362px;white-space:nowrap;-webkit-text-stroke:0.3px #f3f4f6;">Safran Landing Systems</div><svg style="position:absolute;left:1126px;top:1118.5px" width="16" height="16" viewBox="0 0 24 24" fill="none" stroke="#facc15" stroke-width="2" stroke-linecap="round" stroke-linejoin="round"><path d="m15.477 12.89 1.515 8.526a.5.5 0 0 1-.81.47l-3.58-2.687a1 1 0 0 0-1.197 0l-3.586 2.686a.5.5 0 0 1-.81-.469l1.514-8.526"/><circle cx="12" cy="8" r="6"/></svg><div id="t88" style="position:absolute;left:1147.5px;top:1116.96px;font-size:19.3px;line-height:1;font-weight:400;color:#9aa3b6;letter-spacing:-0.245px;white-space:nowrap;-webkit-text-stroke:0.3px #9aa3b6;">4.7/5.0</div><svg style="position:absolute;left:1420.6px;top:1097.1px" width="21.8" height="21.8" viewBox="0 0 24 24" fill="none" stroke="#9aa3b6" stroke-width="1.8" stroke-linecap="round" stroke-linejoin="round"><circle cx="12" cy="12" r="10"/><polyline points="12 6 12 12 16 14"/></svg><div id="t89" style="position:absolute;left:1452.9px;top:1097.28px;font-size:22px;line-height:1;font-weight:400;color:#d1d5db;letter-spacing:-0.113px;white-space:nowrap;-webkit-text-stroke:0.3px #d1d5db;">3-5 days</div><div style="position:absolute;left:1585.5px;top:1093.8px;width:53.59999999999991px;height:28.5px;box-sizing:border-box;border-radius:9px;background:#141a30;border:1px solid #2a3663;color:#6aa6f6;font-size:16px;font-weight:700;letter-spacing:-0.6px;text-indent:-0.6px;text-align:center;line-height:28.5px;padding-top:0px">FAA</div><div style="position:absolute;left:1645.1px;top:1093.8px;width:82.09999999999991px;height:28.5px;box-sizing:border-box;border-radius:9px;background:#141a30;border:1px solid #2a3663;color:#6aa6f6;font-size:16px;font-weight:700;letter-spacing:-0.6px;text-indent:-0.6px;text-align:center;line-height:28.5px;padding-top:0px">AS9100</div><div style="position:absolute;left:1929.4px;top:1091px;width:86.3px;height:34px;box-sizing:border-box;border-radius:6px;background:#132839;border:1px solid #1f4a5c"></div><svg style="position:absolute;left:1941.4px;top:1100px" width="16" height="16" viewBox="0 0 24 24" fill="none" stroke="#4fd1e8" stroke-width="2" stroke-linecap="round" stroke-linejoin="round"><path d="M9 17H7A5 5 0 0 1 7 7h2"/><path d="M15 7h2a5 5 0 1 1 0 10h-2"/><line x1="8" x2="16" y1="12" y2="12"/></svg><div id="t90" style="position:absolute;left:1962.2px;top:1099.98px;font-size:16.8px;line-height:1;font-weight:400;color:#4fd1e8;letter-spacing:0.000px;white-space:nowrap;-webkit-text-stroke:0.3px #4fd1e8;">Chain</div>
</div>
</body></html>
